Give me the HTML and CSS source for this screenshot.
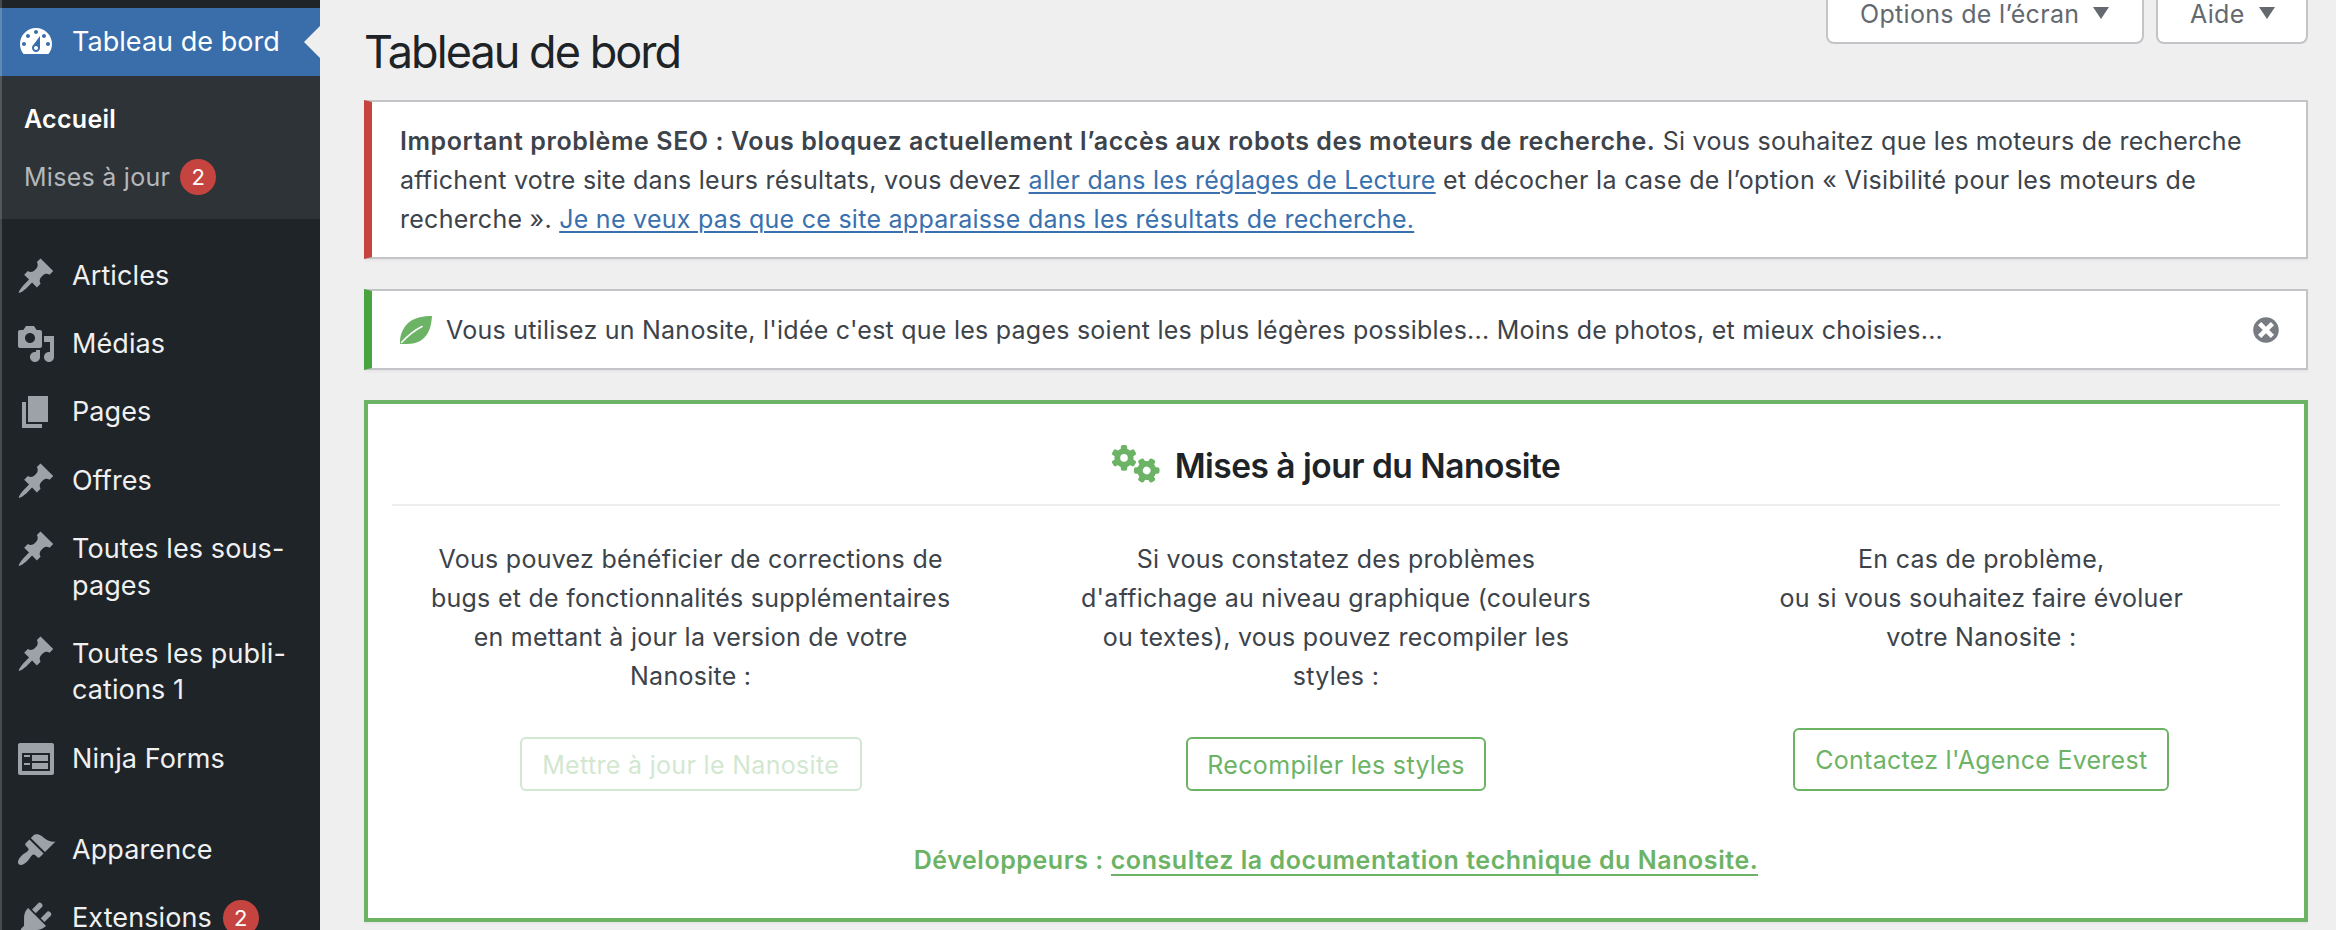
FILE: index.html
```html
<!DOCTYPE html>
<html lang="fr">
<head>
<meta charset="utf-8">
<title>Tableau de bord</title>
<link rel="stylesheet" href="styles.css">
</head>
<body>
<svg class="defs" width="0" height="0">
  <defs>
    <symbol id="pin" viewBox="0 0 20 20"><path d="M10.44 3.02l1.82-1.82 6.36 6.35-1.83 1.82c-1.05-.68-2.48-.57-3.41.36l-.75.75c-.92.93-1.04 2.35-.35 3.41l-1.83 1.82-2.41-2.41-2.8 2.79c-.42.42-3.38 2.71-3.8 2.29s1.86-3.39 2.28-3.81l2.79-2.79L4.1 9.36l1.83-1.82c1.05.69 2.48.57 3.4-.36l.75-.75c.93-.92 1.05-2.35.36-3.41z"/></symbol>
  </defs>
</svg>
<div class="admin">
  <nav class="sidebar">
    <a class="item current">
      <svg class="icon" viewBox="0 0 20 20"><path d="M3.76 16h12.48c1.1-1.37 1.76-3.11 1.76-5 0-4.42-3.58-8-8-8s-8 3.58-8 8c0 1.89.66 3.63 1.76 5zM10 4c.55 0 1 .45 1 1s-.45 1-1 1-1-.45-1-1 .45-1 1-1zM6 6c.55 0 1 .45 1 1s-.45 1-1 1-1-.45-1-1 .45-1 1-1zm8 0c.55 0 1 .45 1 1s-.45 1-1 1-1-.45-1-1 .45-1 1-1zm-5.37 5.55L12 7v6c0 1.1-.9 2-2 2s-2-.9-2-2c0-.57.24-1.08.63-1.45zM4 10c.55 0 1 .45 1 1s-.45 1-1 1-1-.45-1-1 .45-1 1-1zm12 0c.55 0 1 .45 1 1s-.45 1-1 1-1-.45-1-1 .45-1 1-1zm-5 3c0-.55-.45-1-1-1s-1 .45-1 1 .45 1 1 1 1-.45 1-1z"/></svg>
      <span class="label">Tableau de bord</span>
    </a>
    <div class="submenu">
      <a class="sub active">Accueil</a>
      <a class="sub">Mises à jour <span class="badge">2</span></a>
    </div>
    <a class="item first"><svg class="icon"><use href="#pin"/></svg><span class="label">Articles</span></a>
    <a class="item"><svg class="icon" viewBox="0 0 20 20"><path d="M13 11V4c0-.55-.45-1-1-1h-1.67L9 1H5L3.67 3H2c-.55 0-1 .45-1 1v7c0 .55.45 1 1 1h10c.55 0 1-.45 1-1zM7 4.5c1.38 0 2.5 1.12 2.5 2.5S8.38 9.5 7 9.5 4.5 8.38 4.5 7 5.62 4.5 7 4.5zM14 6h5v10.5c0 1.38-1.12 2.5-2.5 2.5S14 17.88 14 16.5s1.12-2.5 2.5-2.5c.17 0 .34.02.5.05V9h-3V6zm-4 8.05V13h2v3.5c0 1.38-1.12 2.5-2.5 2.5S7 17.88 7 16.5 8.12 14 9.5 14c.17 0 .34.02.5.05z"/></svg><span class="label">Médias</span></a>
    <a class="item"><svg class="icon" viewBox="0 0 20 20"><path d="M6 15V2h10v13H6zm-1 1h8v2H3V5h2v11z"/></svg><span class="label">Pages</span></a>
    <a class="item"><svg class="icon"><use href="#pin"/></svg><span class="label">Offres</span></a>
    <a class="item"><svg class="icon"><use href="#pin"/></svg><span class="label">Toutes les sous-<br>pages</span></a>
    <a class="item"><svg class="icon"><use href="#pin"/></svg><span class="label">Toutes les publi-<br>cations 1</span></a>
    <a class="item"><svg class="icon" viewBox="0 0 20 20"><path d="M2 2h16c.55 0 1 .45 1 1v14c0 .55-.45 1-1 1H2c-.55 0-1-.45-1-1V3c0-.55.45-1 1-1zm15 14V7H3v9h14zM4 8v1h3V8H4zm4 0v3h8V8H8zm-4 4v1h3v-1H4zm4 0v3h8v-3H8z"/></svg><span class="label">Ninja Forms</span></a>
    <a class="item after-separator"><svg class="icon" viewBox="0 0 20 20"><path d="M14.48 11.06L7.41 3.99l1.5-1.5c.5-.56 2.3-.47 3.51.32 1.21.8 1.43 1.28 2.91 2.1 1.18.64 2.45 1.26 4.45.85zm-.71.71L6.7 4.7 4.93 6.47c-.39.39-.39 1.02 0 1.41l1.06 1.06c.39.39.39 1.03 0 1.42-.6.6-1.43 1.11-2.21 1.69-.35.26-.7.53-1.01.84C1.43 14.23.4 16.08 1.4 17.07c.99 1 2.84-.03 4.18-1.36.31-.31.58-.66.85-1.02.57-.78 1.08-1.61 1.69-2.21.39-.39 1.02-.39 1.41 0l1.06 1.06c.39.39 1.02.39 1.41 0z"/></svg><span class="label">Apparence</span></a>
    <a class="item"><svg class="icon" viewBox="0 0 20 20"><path d="M13.11 4.36L9.87 7.6 8 5.73l3.24-3.24c.35-.34 1.05-.2 1.56.32.52.51.66 1.21.31 1.55zm-8 1.77l.91-1.12 9.01 9.01-1.19.84c-.71.71-2.63 1.16-3.82 1.16H6.14L4.9 17.26c-.59.59-1.54.59-2.12 0-.59-.58-.59-1.53 0-2.12l1.24-1.24v-3.88c0-1.13.4-3.19 1.09-3.89zm7.26 3.97l3.24-3.24c.34-.35 1.04-.21 1.55.31.52.51.66 1.21.31 1.55l-3.24 3.25z"/></svg><span class="label">Extensions <span class="badge">2</span></span></a>
  </nav>

  <main class="content">
    <header class="head">
      <h1 class="title">Tableau de bord</h1>
      <div class="tabs">
        <button class="tab options"><span>Options de l’écran</span><i class="caret"></i></button>
        <button class="tab help"><span>Aide</span><i class="caret"></i></button>
      </div>
    </header>

    <section class="notice error">
      <p><strong>Important problème SEO : Vous bloquez actuellement l’accès aux robots des moteurs de recherche.</strong> Si vous souhaitez que les moteurs de recherche<br>affichent votre site dans leurs résultats, vous devez <a class="link">aller dans les réglages de Lecture</a> <span class="loose">et décocher la case de l’option «&nbsp;Visibilité pour les moteurs de</span><br>recherche&nbsp;». <a class="link">Je ne veux pas que ce site apparaisse dans les résultats de recherche.</a></p>
    </section>

    <section class="notice info">
      <svg class="leaf" viewBox="0 0 32 28"><path class="blade" d="M0 28C-.6 20 3 10.500 10 5.500 16 1.300 23 .2 32 0c-.6 8.500-2.200 16.500-8 22-5 5-12 6.500-24 6z"/><path class="vein" d="M1.500 26.500C8 19.500 15 14 22 10.500"/></svg>
      <p>Vous utilisez un Nanosite, l'idée c'est que les pages soient les plus légères possibles... Moins de photos, et mieux choisies...</p>
      <svg class="dismiss" viewBox="0 0 20 20"><path d="M10 2c4.420 0 8 3.580 8 8s-3.580 8-8 8-8-3.580-8-8 3.580-8 8-8zm5 11l-3-3 3-3-2-2-3 3-3-3-2 2 3 3-3 3 2 2 3-3 3 3z"/></svg>
    </section>

    <section class="card">
      <h2 class="card-title">
        <svg class="gears" viewBox="0 0 48 38">
          <g transform="translate(12 12.900)">
            <circle r="9.600"/>
            <rect class="tooth" x="-3.200" y="-12.800" width="6.400" height="25.600" rx="2"/>
            <rect class="tooth" x="-3.200" y="-12.800" width="6.400" height="25.600" rx="2" transform="rotate(60)"/>
            <rect class="tooth" x="-3.200" y="-12.800" width="6.400" height="25.600" rx="2" transform="rotate(120)"/>
            <circle class="hole" r="3.800"/>
          </g>
          <g transform="translate(34.700 25.500) rotate(30)">
            <circle r="9.600"/>
            <rect class="tooth" x="-3.200" y="-12.800" width="6.400" height="25.600" rx="2"/>
            <rect class="tooth" x="-3.200" y="-12.800" width="6.400" height="25.600" rx="2" transform="rotate(60)"/>
            <rect class="tooth" x="-3.200" y="-12.800" width="6.400" height="25.600" rx="2" transform="rotate(120)"/>
            <circle class="hole" r="3.800"/>
          </g>
        </svg>
        <span>Mises à jour du Nanosite</span>
      </h2>
      <div class="columns">
        <div class="column">
          <p>Vous pouvez bénéficier de corrections de<br>bugs et de fonctionnalités supplémentaires<br>en mettant à jour la version de votre<br>Nanosite :</p>
          <button class="btn disabled b1">Mettre à jour le Nanosite</button>
        </div>
        <div class="column">
          <p>Si vous constatez des problèmes<br>d'affichage au niveau graphique (couleurs<br>ou textes), vous pouvez recompiler les<br>styles :</p>
          <button class="btn b2">Recompiler les styles</button>
        </div>
        <div class="column">
          <p>En cas de problème,<br>ou si vous souhaitez faire évoluer<br>votre Nanosite :</p>
          <button class="btn tall b3">Contactez l'Agence Everest</button>
        </div>
      </div>
      <p class="devs">Développeurs : <a class="doc">consultez la documentation technique du Nanosite.</a></p>
    </section>
  </main>
</div>
</body>
</html>
```
FILE: styles.css
```css
* { box-sizing: border-box; }

body {
  margin: 0;
  height: 930px;
  overflow: hidden;
  background: #efefef;
  color: #3c434a;
  font: 400 25px/39px Inter, "Liberation Sans", sans-serif;
  letter-spacing: .27px;
}

p, h1, h2 { margin: 0; }
button { margin: 0; font: inherit; letter-spacing: .32px; }
.defs { position: absolute; }

.admin { display: flex; height: 930px; overflow: hidden; }

/* Sidebar */
.sidebar {
  flex: none;
  width: 320px;
  height: 960px;
  padding-top: 8px;
  background: #1f2428;
  box-shadow: inset 2px 0 #464a4e;
}
.item {
  position: relative;
  display: flex;
  gap: 16px;
  padding: 14px 0 14px 16px;
  color: #f0f0f1;
  font-size: 27px;
  line-height: 36.4px;
  letter-spacing: .1px;
}
.icon { flex: none; width: 40px; height: 40px; fill: #9ca2a7; }
.label { margin: 2px 0; white-space: nowrap; }
.current { height: 68px; background: #3a6eab; color: #fff; box-shadow: inset 2px 0 #6189b8; letter-spacing: .04px; }
.current .icon { fill: #fff; }
.current::after {
  content: "";
  position: absolute;
  right: 0;
  top: 18px;
  border: 16px solid transparent;
  border-left: 0;
  border-right-color: #efefef;
}
.submenu {
  height: 143px;
  padding: 14px 0 0 24px;
  background: #2e3337;
  box-shadow: inset 2px 0 #52575a;
}
.sub { display: flex; align-items: center; gap: 10px; height: 58px; color: #b4b8bb; }
.sub.active { color: #fff; font-weight: 600; letter-spacing: .3px; }
.first { margin-top: 22.600px; }
.after-separator { margin-top: 22.400px; }
.badge {
  display: inline-block;
  width: 36px;
  height: 36px;
  border-radius: 18px;
  background: #c5443f;
  color: #fff;
  font-size: 22px;
  line-height: 36px;
  text-align: center;
  letter-spacing: 0;
}
.label .badge { margin-left: 3px; vertical-align: 1px; }

/* Main area */
.content { flex: 1; padding: 0 28px 0 44px; }
.head { display: flex; justify-content: space-between; height: 100px; }
.title { padding-top: 23px; color: #1d2327; font-size: 45px; line-height: 58px; font-weight: 400; letter-spacing: -1.95px; }
.tabs { display: flex; gap: 12px; }
.tab {
  display: flex;
  gap: 14px;
  height: 44px;
  padding: 0 32px;
  border: 2px solid #c3c4c7;
  border-top: 0;
  border-radius: 0 0 8px 8px;
  background: #fff;
  color: #646970;
  line-height: 28px;
  white-space: nowrap;
}
.options { width: 318px; }
.help { width: 152px; }
.caret {
  margin-top: 7px;
  border: 8px solid transparent;
  border-top: 12px solid #646970;
  border-bottom: 0;
}

.notice {
  border: 2px solid #c3c4c7;
  border-left-width: 8px;
  background: #fff;
  box-shadow: 0 2px 2px rgba(0, 0, 0, .04);
  white-space: nowrap;
}
.notice strong { font-weight: 600; letter-spacing: .59px; }
.loose { letter-spacing: .33px; }
.error { height: 159px; padding: 20px 28px; border-left-color: #c5443f; }
.info {
  display: flex;
  align-items: center;
  height: 81px;
  margin: 30px 0;
  padding: 0 24px 0 28px;
  border-left-color: #49a33f;
}
.info p { padding-top: 1px; letter-spacing: .24px; }
.link { color: #3970ad; text-decoration: underline; text-decoration-thickness: 2px; text-underline-offset: 3px; }
.leaf { width: 32px; height: 28px; margin-right: 14px; }
.blade { fill: #6db366; }
.vein { fill: none; stroke: #fff; stroke-width: 1.500; stroke-linecap: round; }
.dismiss { width: 32px; height: 32px; margin-left: auto; fill: #787c82; }

.card {
  height: 522px;
  padding: 0 24px;
  border: 4px solid #6db366;
  background: #fff;
  box-shadow: 0 2px 2px rgba(0, 0, 0, .04);
  text-align: center;
}
.card-title {
  display: flex;
  justify-content: center;
  height: 102px;
  padding-top: 40px;
  border-bottom: 2px solid #eee;
  color: #1d2327;
  font-size: 33.500px;
  line-height: 44px;
  font-weight: 600;
  letter-spacing: -.5px;
}
.gears { width: 48px; height: 38px; margin: 1px 15px 0 0; fill: #6db366; }
.hole { fill: #fff; }
.columns {
  display: grid;
  grid-template-columns: repeat(3, 1fr);
  gap: 48px;
  height: 285px;
  padding-top: 34px;
}
.column { display: flex; flex-direction: column; align-items: center; justify-content: space-between; white-space: nowrap; }
.btn {
  height: 54px;
  padding: 2px 0 0;
  border: 2px solid #6db366;
  border-radius: 6px;
  background: #fff;
  color: #6db366;
}
.tall { height: 63px; padding-top: 1px; letter-spacing: .27px; }
.b1 { width: 342px; }
.b2 { width: 300px; }
.b3 { width: 376px; }
.disabled { opacity: .3; }
.devs { padding-top: 50px; color: #6db366; font-weight: 600; letter-spacing: .56px; }
.doc { display: inline-block; height: 35px; line-height: 39px; border-bottom: 2px solid #6db366; vertical-align: top; }
```
